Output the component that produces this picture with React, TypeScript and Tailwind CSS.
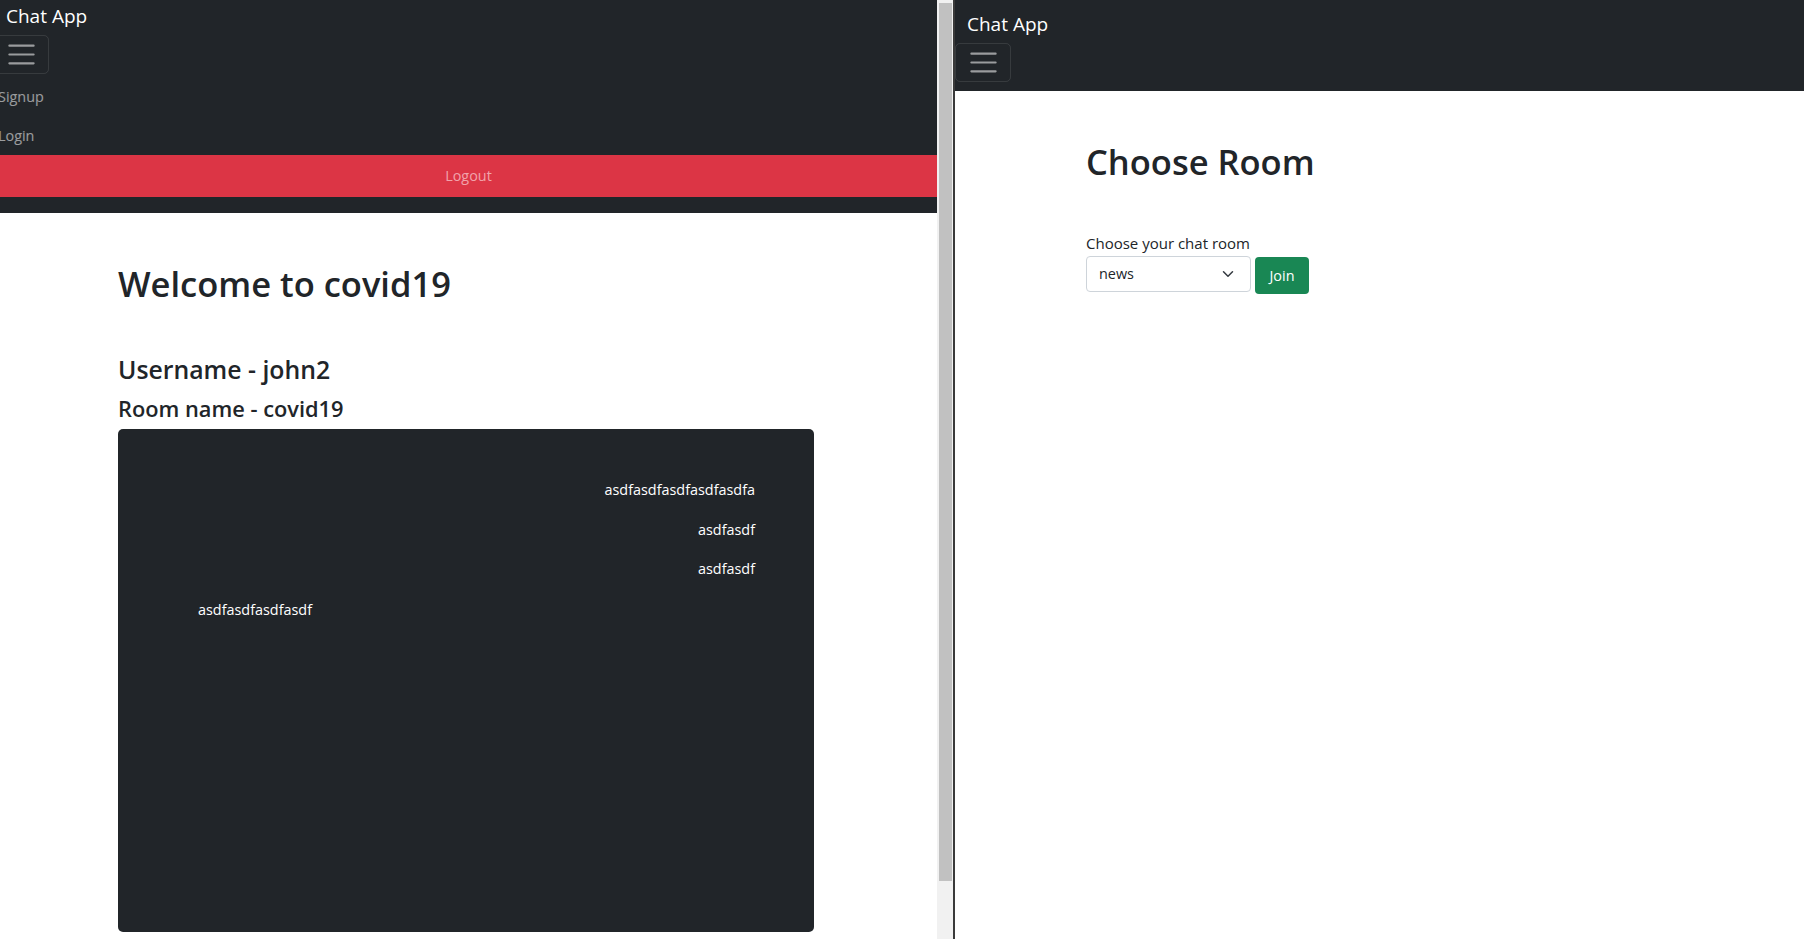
import React from 'react';

const Toggler: React.FC = () => (
  <button className="w-[56px] h-[39px] rounded-[5px] border border-white/10 flex items-center justify-center">
    <svg width="33" height="33" viewBox="0 0 30 30" fill="none">
      <path d="M4 7h22M4 15h22M4 23h22" stroke="rgba(255,255,255,0.55)" strokeWidth="2" strokeLinecap="round" />
    </svg>
  </button>
);

const messages = [
  { text: 'asdfasdfasdfasdfasdfa', mine: true, gap: 'mt-0' },
  { text: 'asdfasdf', mine: true, gap: 'mt-[18px]' },
  { text: 'asdfasdf', mine: true, gap: 'mt-[17px]' },
  { text: 'asdfasdfasdfasdf', mine: false, gap: 'mt-[19px]' },
];

export default function App() {
  return (
    <div className="flex w-[1804px] h-[939px] overflow-hidden bg-white font-['Open_Sans','Noto_Sans',sans-serif] text-[#212529]">
      {/* chat window */}
      <div className="w-[937px] h-[939px] overflow-hidden shrink-0 bg-white">
        <nav className="bg-[#212529] h-[213px] flex flex-col">
          <div className="pl-[6px] mt-[1px] h-[30px] leading-[30px] text-[19px] text-white">Chat App</div>
          <div className="ml-[-7px] mt-[4px]">
            <Toggler />
          </div>
          <a className="mt-[3px] ml-[-2px] h-[39px] leading-[39px] text-[14.4px] text-white/55">Signup</a>
          <a className="ml-[-2px] h-[39px] leading-[39px] text-[14.4px] text-white/55">Login</a>
          <button className="h-[42px] w-full bg-[#dc3545] text-[14.4px] text-[#f1a3ab]">Logout</button>
        </nav>

        <div className="pl-[118px]">
          <h1 className="mt-[49px] text-[34.5px] leading-[43px] font-semibold">Welcome to covid19</h1>
          <h3 className="mt-[49px] text-[24.8px] leading-[30px] font-semibold">Username - john2</h3>
          <h4 className="mt-[12px] text-[21.8px] leading-[26px] font-semibold">Room name - covid19</h4>
          <div className="mt-[7px] w-[696px] h-[503px] rounded-[5px] bg-[#212529] pt-[50px] flex flex-col">
            {messages.map((m, i) => (
              <div
                key={i}
                className={`${m.gap} h-[22px] leading-[22px] text-[14.4px] text-white ${m.mine ? 'text-right pr-[59px]' : 'text-left pl-[80px]'}`}
              >
                {m.text}
              </div>
            ))}
          </div>
        </div>
      </div>

      {/* browser scrollbar */}
      <div className="w-[16px] h-[939px] bg-[#f1f1f1] shrink-0 flex flex-col">
        <div className="ml-[2px] mt-[3px] w-[13px] h-[878px] bg-[#c1c1c1]" />
      </div>
      <div className="w-[2px] h-[939px] bg-[#3a3a3a] shrink-0" />

      {/* room picker window */}
      <div className="flex-1 h-[939px] bg-white">
        <nav className="bg-[#212529] h-[91px] pt-[9px]">
          <div className="pl-[12px] h-[30px] leading-[30px] text-[19px] text-white">Chat App</div>
          <div className="mt-[4px]">
            <Toggler />
          </div>
        </nav>
        <div className="pl-[131px]">
          <h1 className="mt-[49px] text-[34.5px] leading-[43px] font-semibold">Choose Room</h1>
          <label className="block mt-[49px] text-[15px] leading-[22px]">Choose your chat room</label>
          <div className="mt-[2px] flex items-start gap-[4px]">
            <div className="w-[165px] h-[36px] border border-[#ced4da] rounded-[4px] flex items-center justify-between pl-[12px] pr-[16px] text-[14.4px]">
              <span>news</span>
              <svg width="12" height="12" viewBox="0 0 16 16" fill="none">
                <path d="M2 5l6 6 6-6" stroke="#343a40" strokeWidth="2" strokeLinecap="round" strokeLinejoin="round" />
              </svg>
            </div>
            <button className="mt-[1px] w-[54px] h-[37px] bg-[#198754] rounded-[4px] text-white text-[14.4px]">Join</button>
          </div>
        </div>
      </div>
    </div>
  );
}
